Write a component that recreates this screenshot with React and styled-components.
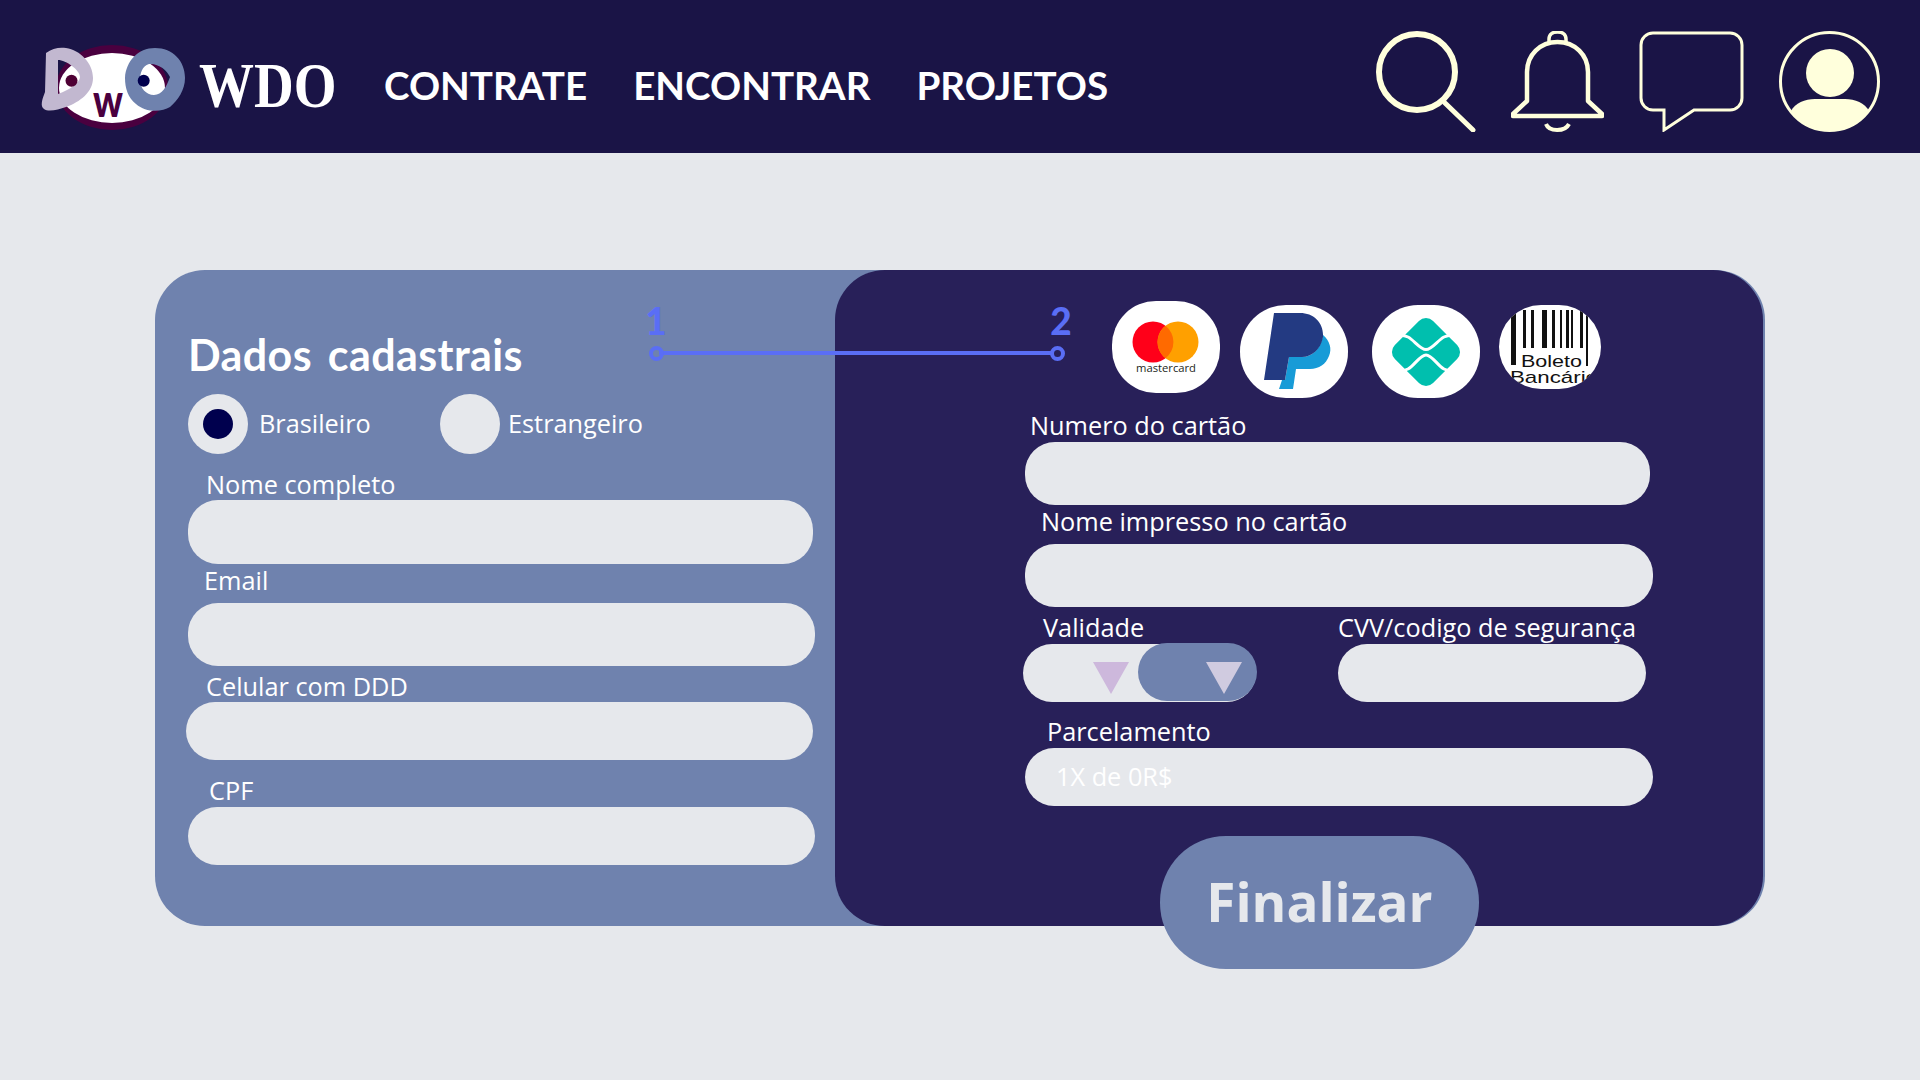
import styled, { createGlobalStyle } from 'styled-components';

const GlobalStyle = createGlobalStyle`
  html, body {
    margin: 0;
    padding: 0;
    width: 1920px;
    height: 1080px;
    overflow: hidden;
    background: #e6e8ec;
    font-family: "Open Sans", "Noto Sans", sans-serif;
  }
  * { box-sizing: border-box; }
`;

const Page = styled.div`
  width: 1920px;
  height: 1080px;
  background: #e6e8ec;
`;

const Header = styled.header`
  height: 153px;
  padding: 30px 40px 0 30px;
  background: #1a1446;
  display: flex;
  align-items: flex-start;
`;

const Brand = styled.div`
  display: flex;
  align-items: center;
  height: 110px;
`;

const BrandName = styled.span`
  display: block;
  margin-left: -1px;
  width: 185px;
  font-family: "Liberation Serif", serif;
  font-size: 55px;
  font-weight: 700;
  color: #fff;
  line-height: 1;
  transform: scaleY(1.16);
  transform-origin: left center;
`;

const Nav = styled.nav`
  display: flex;
  align-items: center;
  height: 110px;
  gap: 46px;
`;

const NavLink = styled.a`
  font-family: "Lato", sans-serif;
  font-weight: 700;
  font-size: 38.6px;
  color: #fff;
  text-decoration: none;
`;

const IconBar = styled.div`
  margin-left: auto;
  display: flex;
  align-items: flex-start;
  gap: 35px;
  padding-top: 1px;
`;

const Main = styled.main`
  padding: 117px 155px 0;
`;

const Card = styled.section`
  position: relative;
  display: flex;
  height: 656px;
  padding-right: 2px;
  background: #6f82ae;
  border-radius: 50px;
`;

const LeftPane = styled.div`
  width: 680px;
  padding: 60px 0 0 33px;
`;

const RightPane = styled.div`
  flex: 1;
  padding: 31px 0 0 190px;
  background: #282059;
  border-radius: 50px;
`;

const Title = styled.h2`
  margin: 0;
  height: 50px;
  font-family: "Comic Sans MS", "Lato", cursive;
  font-size: 43px;
  font-weight: 700;
  line-height: 50px;
  letter-spacing: 0.4px;
  word-spacing: 5px;
  color: #fff;
`;

const RadioRow = styled.div`
  display: flex;
  margin-top: 14px;
`;

const RadioOption = styled.label`
  display: flex;
  align-items: center;
  gap: ${(p) => p.$gap}px;
  width: ${(p) => p.$width}px;
  font-size: 25.3px;
  color: #fff;
`;

const RadioText = styled.span`
  margin-top: -2px;
`;

const RadioCircle = styled.span`
  width: 60px;
  height: 60px;
  flex: none;
  border-radius: 50%;
  background: #e6e8ec;
  display: flex;
  align-items: center;
  justify-content: center;
  &::after {
    content: '';
    display: ${(p) => (p.$checked ? 'block' : 'none')};
    width: 30px;
    height: 30px;
    border-radius: 50%;
    background: #00004e;
  }
`;

const Field = styled.div`
  margin-top: ${(p) => p.$top}px;
  margin-left: ${(p) => p.$left || 0}px;
`;

const FieldLabel = styled.label`
  display: block;
  height: 30px;
  padding-left: ${(p) => p.$indent}px;
  margin-bottom: ${(p) => p.$gap || 0}px;
  font-size: 25.3px;
  line-height: 28px;
  color: #fff;
  white-space: nowrap;
`;

const TextBox = styled.input`
  display: block;
  width: ${(p) => p.$width}px;
  height: ${(p) => p.$height}px;
  padding: 0 31px 2px;
  border: none;
  outline: none;
  border-radius: 30px;
  background: #e6e8ec;
  font-family: inherit;
  font-size: 25.3px;
  color: #fff;
  &::placeholder {
    color: #fff;
    opacity: 1;
  }
`;

const Payments = styled.div`
  display: flex;
  align-items: flex-start;
  margin-left: 87px;
  height: 97px;
`;

const PayBadge = styled.div`
  width: ${(p) => p.$width}px;
  height: ${(p) => p.$height}px;
  margin-top: ${(p) => p.$top}px;
  margin-right: ${(p) => p.$right}px;
  flex: none;
  background: #fff;
  border-radius: ${(p) => p.$radius}px;
  overflow: hidden;
  svg { display: block; }
`;

const SplitRow = styled.div`
  display: flex;
  gap: 82px;
  margin-left: -2px;
  margin-top: 6px;
`;

const SelectBox = styled.div`
  width: 233px;
  height: 58px;
  padding-left: 70px;
  display: flex;
  align-items: flex-start;
  border-radius: 30px;
  background: #e6e8ec;
`;

const SelectThumb = styled.div`
  width: 119px;
  height: 58px;
  flex: none;
  margin: -1px 0 0 9px;
  padding: 19px 0 0 68px;
  border-radius: 30px;
  background: #6f82ae;
`;

const Caret = styled.span`
  display: block;
  width: 0;
  height: 0;
  flex: none;
  margin-top: ${(p) => p.$top || 0}px;
  border-left: 18px solid transparent;
  border-right: 18px solid transparent;
  border-top: 32px solid ${(p) => p.$color};
`;

const FinishButton = styled.button`
  display: block;
  width: 319px;
  height: 133px;
  margin: 30px 0 0 135px;
  padding-bottom: 4px;
  border: none;
  border-radius: 66px;
  background: #6f82ae;
  font-family: "Open Sans", sans-serif;
  font-size: 53px;
  font-weight: 700;
  color: #e6e8ec;
`;

const Stepper = styled.div`
  position: absolute;
  left: 494px;
  top: 36px;
  width: 415px;
  display: flex;
  justify-content: space-between;
`;

const StepLine = styled.div`
  position: absolute;
  left: 10px;
  right: 10px;
  top: 45px;
  height: 4px;
  background: #5a6ef5;
`;

const Step = styled.div`
  position: relative;
  width: 14px;
  display: flex;
  flex-direction: column;
  align-items: center;
`;

const StepNumber = styled.span`
  height: 30px;
  margin-bottom: 10px;
  margin-left: ${(p) => p.$shift || 0}px;
  font-family: "Comic Sans MS", "Lato", cursive;
  font-size: 37px;
  font-weight: 900;
  line-height: 30px;
  color: #5a6ef5;
`;

const StepDot = styled.span`
  width: 15px;
  height: 15px;
  border: 4px solid #5a6ef5;
  border-radius: 50%;
`;

const cream = '#ffffdc';

function Logo() {
  return (
    <svg width="170" height="110" viewBox="0 0 170 110">
      <ellipse cx="82" cy="57.5" rx="56" ry="42.5" fill="#4a003f" />
      <ellipse cx="82" cy="58" rx="53" ry="35" fill="#fff" />
      <path
        fillRule="evenodd"
        fill="#c2b8d0"
        d="M16 23 C22 18 30 17 36 18 C50 20 63 33 63 48 C63 62 50 72 36 77 C28 80 18 82 14 79 C10 76 12 70 15 62 Z M28 30 C36 30 50 40 50 47 C50 52 40 60 28 64 Z"
      />
      <circle cx="41.5" cy="50.7" r="6" fill="#4e0034" />
      <text x="63" y="87" fontFamily="Lato, sans-serif" fontWeight="900" fontSize="46" textLength="30" lengthAdjust="spacingAndGlyphs" fill="#4a003f">w</text>
      <path
        fillRule="evenodd"
        fill="#6f82ae"
        d="M125 18 C143 18 155 31 155 48 C155 60 148 70 140 77 C132 82 116 83 106 74 C98 68 95 58 95 48 C96 31 108 18 125 18 Z M119 34 C112 36 110 44 110 50 C110 58 116 65 124 65 C132 65 137 56 140 47 C137 40 128 33 119 34 Z"
      />
      <circle cx="113.7" cy="50.7" r="6" fill="#00004e" />
    </svg>
  );
}

function SearchIcon() {
  return (
    <svg width="100" height="101" viewBox="0 0 100 101" fill="none" stroke={cream}>
      <circle cx="41" cy="41" r="38" strokeWidth="6" />
      <path d="M69 72 L97 99" strokeWidth="5" strokeLinecap="round" />
    </svg>
  );
}

function BellIcon() {
  return (
    <svg width="93" height="101" viewBox="0 0 93 101" fill="none" stroke={cream}>
      <path d="M38 11 V8 C38 3 42 1 46.5 1 C51 1 55 3 55 8 V11" strokeWidth="3.5" />
      <path d="M2 85 L2 83 L16 70 V41 C16 24 29 11 46.5 11 C64 11 77 24 77 41 V70 L91 83 V85 Z" strokeWidth="4.5" strokeLinejoin="round" />
      <path d="M35 93 C38 101 54 101 58 93" strokeWidth="4" />
    </svg>
  );
}

function ChatIcon() {
  return (
    <svg width="105" height="101" viewBox="0 0 105 101" fill="none" stroke={cream} strokeWidth="3">
      <path d="M14 2 H91 A12 12 0 0 1 103 14 V67 A12 12 0 0 1 91 79 H55 L25 99 V79 H14 A12 12 0 0 1 2 67 V14 A12 12 0 0 1 14 2 Z" />
    </svg>
  );
}

function UserIcon() {
  return (
    <svg width="101" height="101" viewBox="0 0 101 101">
      <circle cx="50.5" cy="50.5" r="49" fill="none" stroke={cream} strokeWidth="3" />
      <circle cx="51" cy="42" r="24" fill={cream} />
      <path d="M12 80 C16 72 26 68 36 68 H66 C76 68 86 72 90 80 A49.5 49.5 0 0 1 12 80 Z" fill={cream} />
    </svg>
  );
}

function Mastercard() {
  return (
    <svg width="108" height="92" viewBox="0 0 108 92">
      <circle cx="41" cy="41" r="20.5" fill="#ff0019" />
      <circle cx="66" cy="41" r="20.5" fill="#ffa000" />
      <path d="M53.5 24.8 A20.5 20.5 0 0 1 53.5 57.2 A20.5 20.5 0 0 1 53.5 24.8 Z" fill="#ff6a00" />
      <text x="24" y="71" fontFamily="Open Sans, sans-serif" fontSize="10.5" textLength="60" lengthAdjust="spacingAndGlyphs" fill="#231f20">mastercard</text>
    </svg>
  );
}

function Paypal() {
  return (
    <svg width="108" height="93" viewBox="0 0 108 93">
      <path d="M83 30 C90 36 92 44 89 51 C86 59 79 64 70 64 H56 L53 84 H39 L42 75 H45 L49 52 H62 C72 52 81 44 83 30 Z" fill="#179bd7" />
      <path d="M34 8 H60 C74 8 84 18 83 32 C81 44 72 52 62 52 H49 L45 75 H24 Z" fill="#233a82" />
    </svg>
  );
}

function Pix() {
  return (
    <svg width="108" height="93" viewBox="-54 -47 108 93">
      <rect x="-27" y="-27" width="54" height="54" rx="10" fill="#00bfae" transform="rotate(45)" />
      <g fill="none" stroke="#fff" strokeWidth="3">
        <path d="M-38 -12 C-30 -18 -24 -18 -18 -15 C-12 -12 -6 -2.5 0 -2.5 C6 -2.5 12 -12 18 -15 C24 -18 30 -18 38 -12" />
        <path d="M-38 14 C-30 20 -24 20 -18 17 C-12 14 -6 3 0 3 C6 3 12 14 18 17 C24 20 30 20 38 14" />
      </g>
    </svg>
  );
}

const boletoBars = [
  [12, 5, 60], [24, 3, 43], [32, 3, 43], [43, 5, 43], [53, 3, 43],
  [61, 2, 43], [67, 3, 43], [72, 2, 43], [81, 3, 43], [87, 2, 61],
];

function Boleto() {
  return (
    <svg width="102" height="84" viewBox="0 0 102 84">
      {boletoBars.map(([x, w, end]) => (
        <rect key={x} x={x} y="5" width={w} height={end - 5} fill="#111" />
      ))}
      <text x="22" y="62" fontFamily="Liberation Sans, sans-serif" fontSize="17" textLength="61" lengthAdjust="spacingAndGlyphs" fill="#111">Boleto</text>
      <text x="11" y="78" fontFamily="Liberation Sans, sans-serif" fontSize="17" textLength="88" lengthAdjust="spacingAndGlyphs" fill="#111">Bancário</text>
    </svg>
  );
}

export default function App() {
  return (
    <Page>
      <GlobalStyle />
      <Header>
        <Brand>
          <Logo />
          <BrandName>WDO</BrandName>
        </Brand>
        <Nav>
          <NavLink>CONTRATE</NavLink>
          <NavLink>ENCONTRAR</NavLink>
          <NavLink>PROJETOS</NavLink>
        </Nav>
        <IconBar>
          <SearchIcon />
          <BellIcon />
          <ChatIcon />
          <UserIcon />
        </IconBar>
      </Header>
      <Main>
        <Card>
          <LeftPane>
            <Title>Dados cadastrais</Title>
            <RadioRow>
              <RadioOption $width={252} $gap={11}>
                <RadioCircle $checked />
                <RadioText>Brasileiro</RadioText>
              </RadioOption>
              <RadioOption $width={260} $gap={8}>
                <RadioCircle />
                <RadioText>Estrangeiro</RadioText>
              </RadioOption>
            </RadioRow>
            <Field $top={16}>
              <FieldLabel $indent={18}>Nome completo</FieldLabel>
              <TextBox $width={625} $height={64} />
            </Field>
            <Field $top={2}>
              <FieldLabel $indent={16} $gap={7}>Email</FieldLabel>
              <TextBox $width={627} $height={63} />
            </Field>
            <Field $top={6} $left={-2}>
              <FieldLabel $indent={20}>Celular com DDD</FieldLabel>
              <TextBox $width={627} $height={58} />
            </Field>
            <Field $top={16}>
              <FieldLabel $indent={21} $gap={1}>CPF</FieldLabel>
              <TextBox $width={627} $height={58} />
            </Field>
          </LeftPane>
          <RightPane>
            <Payments>
              <PayBadge $width={108} $height={92} $top={0} $right={20} $radius={44}><Mastercard /></PayBadge>
              <PayBadge $width={108} $height={93} $top={4} $right={24} $radius={46}><Paypal /></PayBadge>
              <PayBadge $width={108} $height={93} $top={4} $right={19} $radius={46}><Pix /></PayBadge>
              <PayBadge $width={102} $height={84} $top={4} $right={0} $radius={42}><Boleto /></PayBadge>
            </Payments>
            <Field $top={13}>
              <FieldLabel $indent={5} $gap={1}>Numero do cartão</FieldLabel>
              <TextBox $width={625} $height={63} />
            </Field>
            <Field $top={2}>
              <FieldLabel $indent={16} $gap={7}>Nome impresso no cartão</FieldLabel>
              <TextBox $width={628} $height={63} />
            </Field>
            <SplitRow>
              <div>
                <FieldLabel $indent={20} $gap={1}>Validade</FieldLabel>
                <SelectBox>
                  <Caret $color="#cdb8dc" $top={18} />
                  <SelectThumb>
                    <Caret $color="#d0cbe0" />
                  </SelectThumb>
                </SelectBox>
              </div>
              <div>
                <FieldLabel $indent={0} $gap={1}>CVV/codigo de segurança</FieldLabel>
                <TextBox $width={308} $height={58} />
              </div>
            </SplitRow>
            <Field $top={15}>
              <FieldLabel $indent={22} $gap={1}>Parcelamento</FieldLabel>
              <TextBox $width={628} $height={58} placeholder="1X de 0R$" />
            </Field>
            <FinishButton>Finalizar</FinishButton>
          </RightPane>
          <Stepper>
            <StepLine />
            <Step>
              <StepNumber>1</StepNumber>
              <StepDot />
            </Step>
            <Step>
              <StepNumber $shift={8}>2</StepNumber>
              <StepDot />
            </Step>
          </Stepper>
        </Card>
      </Main>
    </Page>
  );
}
